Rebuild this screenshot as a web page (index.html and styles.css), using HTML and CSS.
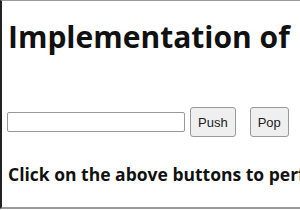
FILE: index.html
```html
<!DOCTYPE html>
<html>
    <head>
        <title>Stack</title>
        <link rel="stylesheet" href="styles.css">
    </head>
    <body>
        <div class="frame">
            <h1 class="title">Implementation of</h1>
            <div class="controls">
                <input type="text" class="stack_input" />
                <button class="btn">Push</button>
                <button class="btn btn_pop">Pop</button>
            </div>
            <p class="hint">Click on the above buttons to perform stack operations</p>
        </div>
    </body>
</html>
```

FILE: styles.css
```css
html, body{
    margin: 0;
    padding: 0;
    overflow: hidden;
    background: #fff;
}
.frame{
    width: 340px;
    height: 206px;
    border-top: 1px solid #9a9a9a;
    border-bottom: 2px solid #9a9a9a;
    border-left: 2px solid #222;
    white-space: nowrap;
    font-family: "Open Sans", sans-serif;
}
.title{
    margin: 0;
    padding: 14px 0 0 6px;
    font-size: 30px;
    font-weight: bold;
    line-height: 44px;
    color: #111;
}
.controls{
    display: flex;
    align-items: center;
    padding: 48px 0 0 5px;
}
.stack_input{
    width: 172px;
    height: 18px;
    margin: 0;
    padding: 0 2px;
    border: 1px solid #999;
    border-radius: 2px;
}
.btn{
    height: 30px;
    margin-left: 5px;
    padding: 0 7px;
    font-family: "Liberation Sans", Arial, sans-serif;
    font-size: 13px;
    color: #222;
    background: #efefef;
    border: 1px solid #999;
    border-radius: 3px;
}
.btn_pop{
    margin-left: 14px;
}
.hint{
    margin: 0;
    padding: 25px 0 0 6px;
    font-size: 17.5px;
    font-weight: bold;
    color: #111;
}
```
